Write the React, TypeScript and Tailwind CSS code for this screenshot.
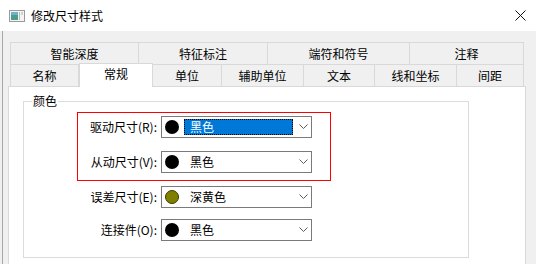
import React from 'react';

// Dialog: 修改尺寸样式 (dimension style)

const row1 = [
  { label: '智能深度', w: 'w-[129px]' },
  { label: '特征标注', w: 'w-[129px]' },
  { label: '端符和符号', w: 'w-[142px]' },
  { label: '注释', w: 'w-[114px]' },
];

const row2 = [
  { label: '名称', w: 'w-[69px]' },
  { label: '常规', w: 'w-[74px]', active: true },
  { label: '单位', w: 'w-[69px]' },
  { label: '辅助单位', w: 'w-[82px]' },
  { label: '文本', w: 'w-[71px]' },
  { label: '线和坐标', w: 'w-[82px]' },
  { label: '间距', w: 'w-[67px]' },
];

function Chevron() {
  return (
    <svg width="9" height="6" viewBox="0 0 9 6" className="ml-auto shrink-0">
      <path d="M0.5 0.5 L4.5 4.5 L8.5 0.5" fill="none" stroke="#5a5a5a" strokeWidth="1" />
    </svg>
  );
}

interface ComboProps {
  dot: string;
  text: string;
  selected?: boolean;
}

function Combo({ dot, text, selected = false }: ComboProps) {
  return (
    <div className="w-[151px] h-[22px] border border-[#7a7a7a] bg-white flex items-center pl-[3px] pr-[3px]">
      <span className={`w-[14px] h-[14px] rounded-full shrink-0 ${dot}`} />
      <div
        className={
          selected
            ? 'ml-[5px] h-[16px] w-[109px] bg-[#0078d7] text-white border border-dotted border-black pl-[5px] flex items-center'
            : 'ml-[5px] h-[16px] w-[109px] border border-transparent pl-[5px] flex items-center text-black'
        }
      >
        {text}
      </div>
      <Chevron />
    </div>
  );
}

function Field({ label, children }: { label: string; children: React.ReactNode }) {
  return (
    <div className="flex items-center">
      <div className="w-[79px] text-right text-black leading-none">{label}</div>
      <div className="ml-[4px]">{children}</div>
    </div>
  );
}

function TitleIcon() {
  return (
    <svg width="16" height="12" viewBox="0 0 16 12">
      <rect x="0.5" y="0.5" width="15" height="11" fill="#f4f4f4" stroke="#9a9a9a" />
      <rect x="2" y="2" width="7" height="8" fill="#4f9a8c" />
      <rect x="2" y="2" width="7" height="3" fill="#6fb3c9" />
      <rect x="10" y="2" width="1" height="8" fill="#b8b8b8" />
      <rect x="12" y="2" width="2" height="3" fill="#d0d0d0" />
    </svg>
  );
}

export default function App() {
  return (
    <div className="w-[536px] h-[264px] overflow-hidden bg-[#f0f0f0] text-[12px] font-['Noto_Sans_CJK_SC','Microsoft_YaHei',sans-serif]">
      {/* Title bar */}
      <div className="h-[31px] bg-white flex items-center pl-[9px] pr-[10px]">
        <TitleIcon />
        <span className="ml-[6px] text-black">修改尺寸样式</span>
        <svg width="11" height="11" viewBox="0 0 11 11" className="ml-auto">
          <path d="M0.5 0.5 L10.5 10.5 M10.5 0.5 L0.5 10.5" stroke="#111" strokeWidth="1" />
        </svg>
      </div>

      {/* Body */}
      <div className="ml-[2px] h-[233px] border-l border-[#a8a8a8] pl-[5px] pt-[11px]">
        {/* Tab rows */}
        <div className="ml-[2px] flex w-[514px] h-[22px]">
          {row1.map((t, i) => (
            <div
              key={t.label}
              className={`${t.w} h-full border-t border-r border-[#d9d9d9] ${i === 0 ? 'border-l' : ''} flex items-center justify-center text-black`}
            >
              {t.label}
            </div>
          ))}
        </div>
        <div className="ml-[2px] flex items-end w-[514px] h-[22px]">
          {row2.map((t, i) => (
            <div
              key={t.label}
              className={
                t.active
                  ? `${t.w} h-[24px] -mb-px relative z-10 bg-white border-t border-r border-l border-[#d9d9d9] flex items-center justify-center pb-[3px] text-black`
                  : `${t.w} h-full border-t border-r border-[#d9d9d9] ${i === 0 ? 'border-l' : ''} flex items-center justify-center text-black`
              }
            >
              {t.label}
            </div>
          ))}
        </div>

        {/* Tab panel */}
        <div className="w-[518px] h-[200px] bg-white border border-[#d9d9d9] pt-[14px] pl-[14px]">
          <div className="relative w-[446px] h-[157px] border border-[#dcdcdc] pt-[10px]">
            <span className="absolute left-[8px] -top-[8px] bg-white px-[1px] text-black leading-[14px]">颜色</span>

            <div className="ml-[53px] w-[254px] h-[69px] border border-[#ff0000] pt-[3px] flex flex-col gap-[13px]">
              <Field label="驱动尺寸(R):">
                <Combo dot="bg-black" text="黑色" selected />
              </Field>
              <Field label="从动尺寸(V):">
                <Combo dot="bg-black" text="黑色" />
              </Field>
            </div>

            <div className="ml-[54px] mt-[5px] flex flex-col gap-[11px]">
              <Field label="误差尺寸(E):">
                <Combo dot="bg-[#808000] border border-[#3a3a00]" text="深黄色" />
              </Field>
              <Field label="连接件(O):">
                <Combo dot="bg-black" text="黑色" />
              </Field>
            </div>
          </div>
        </div>
      </div>
    </div>
  );
}
